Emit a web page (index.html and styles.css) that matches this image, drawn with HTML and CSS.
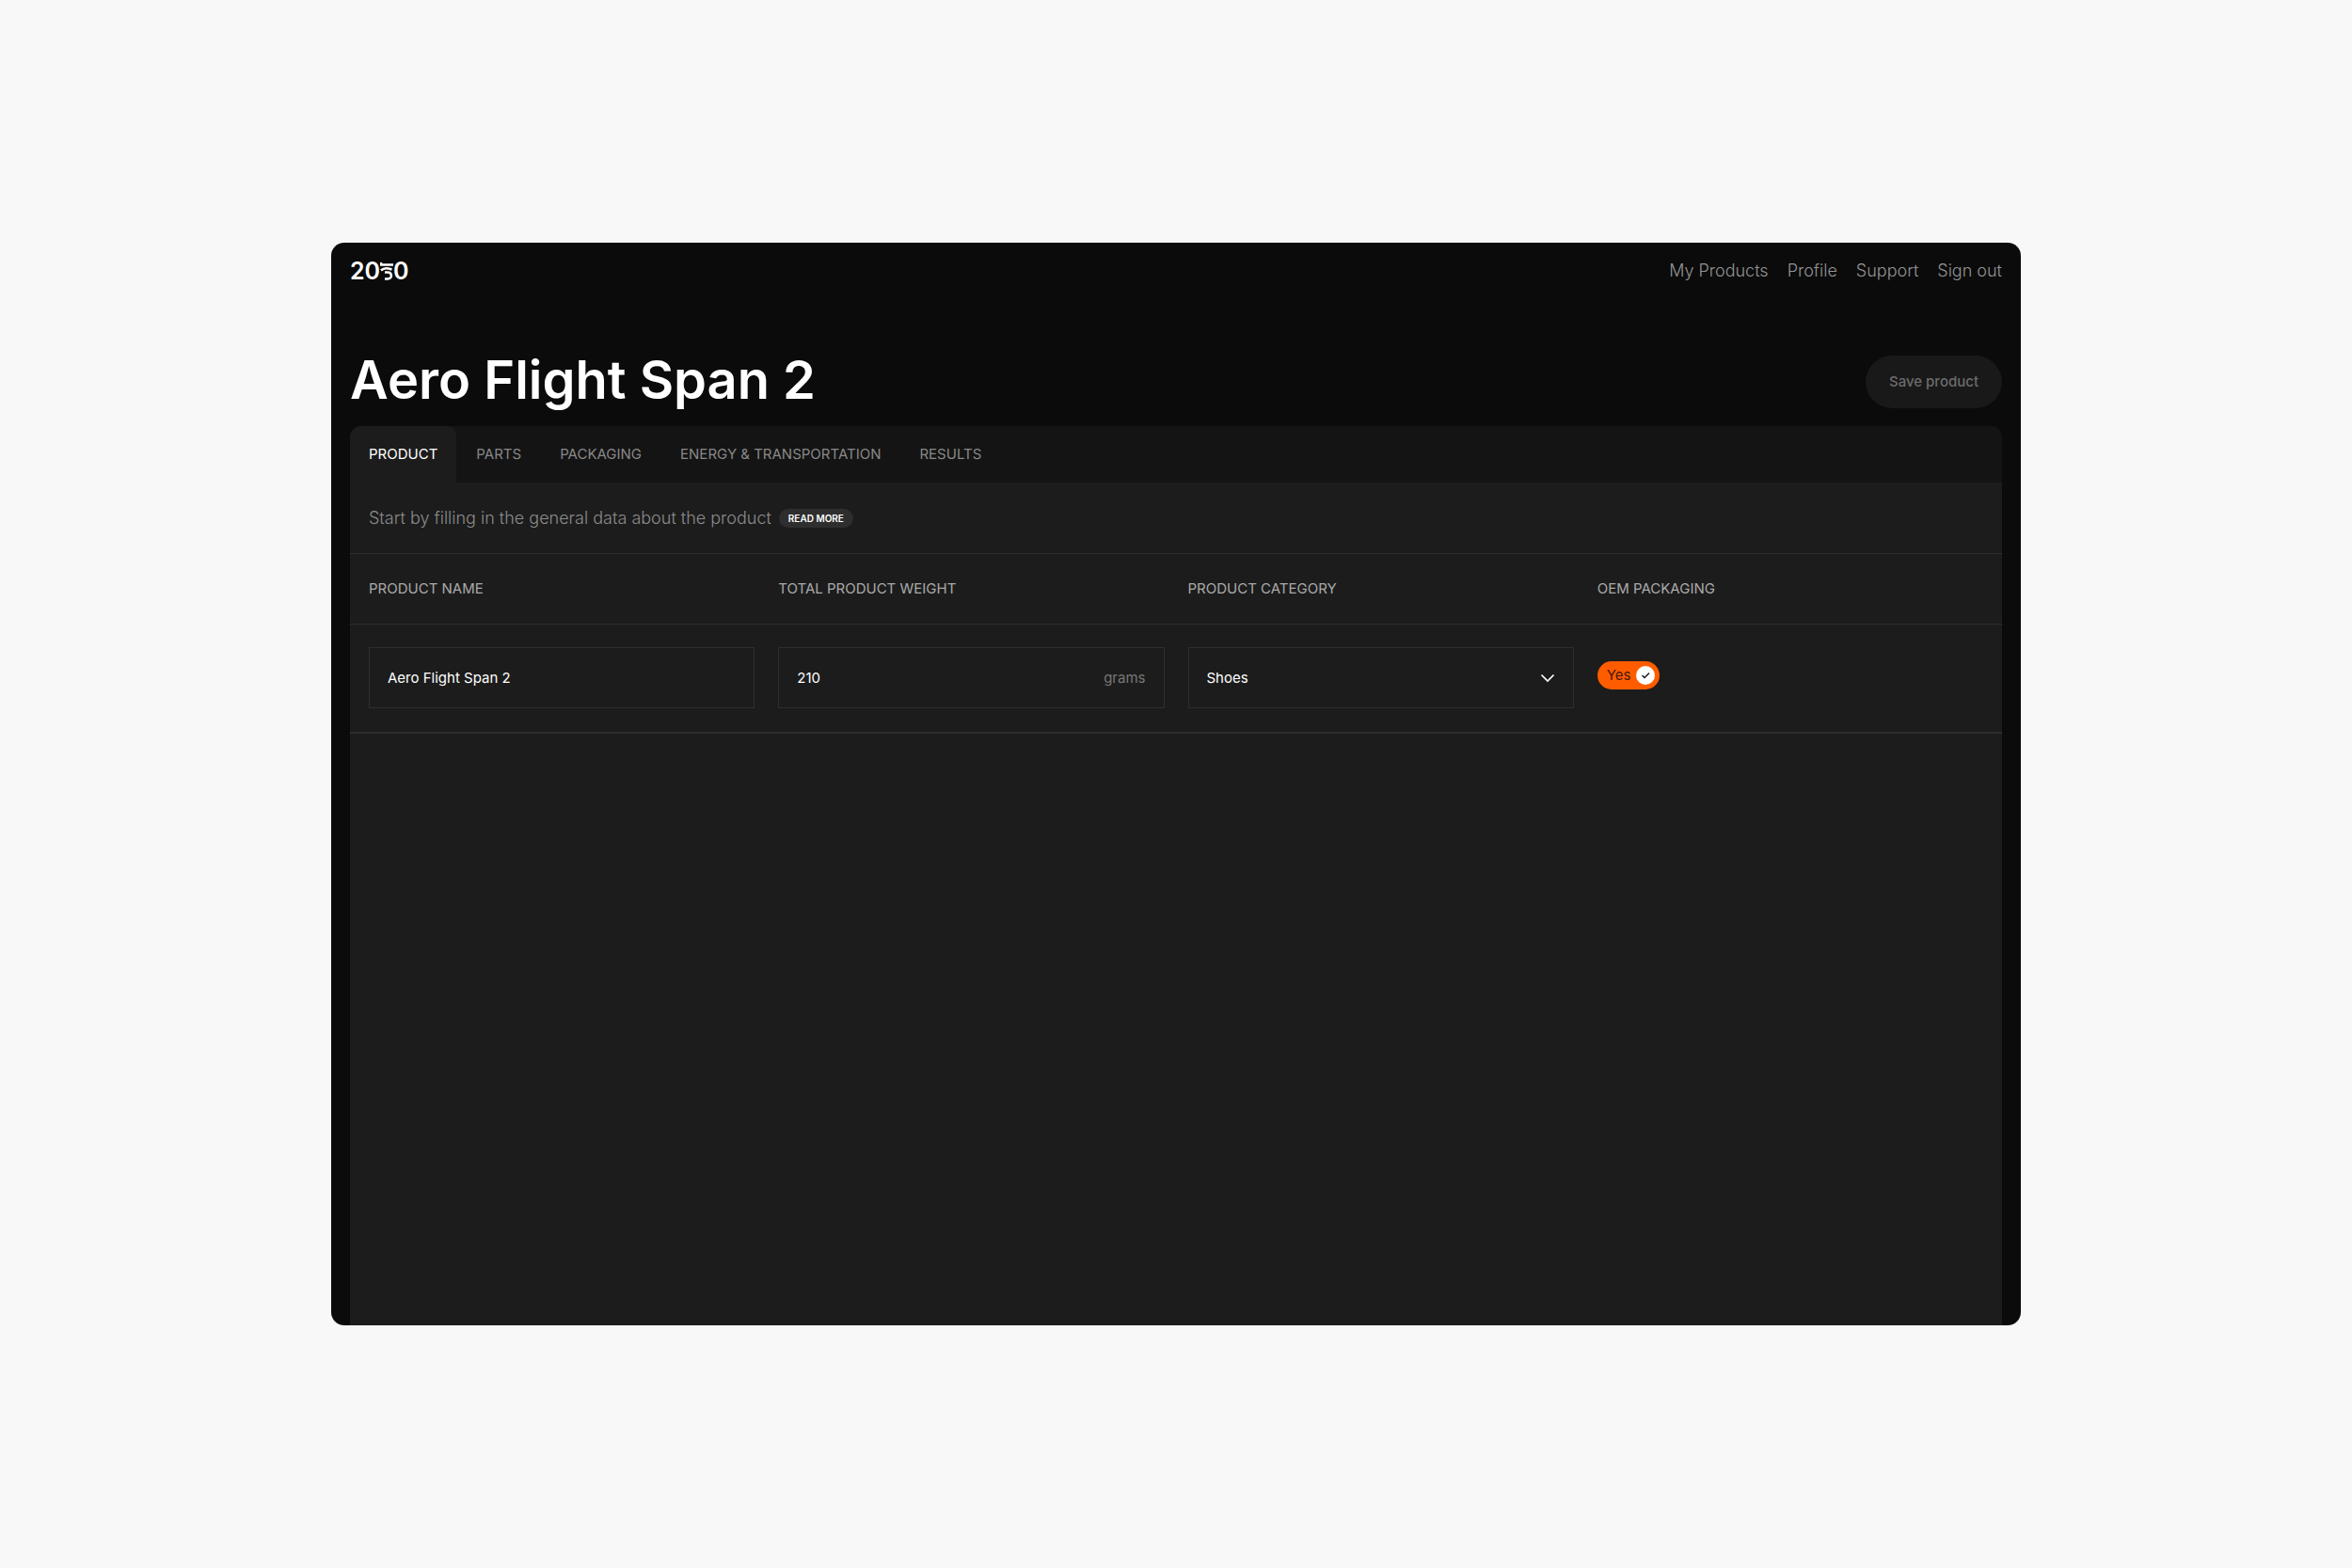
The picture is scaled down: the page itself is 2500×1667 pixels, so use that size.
FILE: index.html
```html
<!DOCTYPE html>
<html lang="en">
<head>
<meta charset="utf-8">
<meta name="viewport" content="width=device-width, initial-scale=1">
<title>Aero Flight Span 2</title>
<link rel="stylesheet" href="styles.css">
</head>
<body>
<div class="window">
  <header class="topbar">
    <a class="logo" href="#" aria-label="2050">
      <span>20</span>
      <svg class="logo-mark" viewBox="0 0 14 20" width="14" height="20" aria-hidden="true">
        <path d="M1 1V3.500H14M1 9.500C3 7.500 6 7 9 7.500L12.500 8.500" fill="none" stroke="#fff" stroke-width="2.500"/>
        <path d="M5 11.500H8C13 11.500 13.500 18.500 8 18.500H5" fill="none" stroke="#fff" stroke-width="2.500"/>
      </svg>
      <span>0</span>
    </a>
    <nav class="nav">
      <a href="#">My Products</a>
      <a href="#">Profile</a>
      <a href="#">Support</a>
      <a href="#">Sign out</a>
    </nav>
  </header>
  <main class="content">
    <div class="heading">
      <h1 class="title">Aero Flight Span 2</h1>
      <button class="save" type="button">Save product</button>
    </div>
    <section class="panel">
      <nav class="tabs">
        <a class="tab tab-active" href="#" aria-current="page">PRODUCT</a>
        <a class="tab" href="#">PARTS</a>
        <a class="tab" href="#">PACKAGING</a>
        <a class="tab" href="#">ENERGY &amp; TRANSPORTATION</a>
        <a class="tab" href="#">RESULTS</a>
      </nav>
      <div class="intro">
        <p>Start by filling in the general data about the product</p>
        <button class="more" type="button">READ MORE</button>
      </div>
      <form class="form">
        <div class="row labels">
          <label for="name">PRODUCT NAME</label>
          <label for="weight">TOTAL PRODUCT WEIGHT</label>
          <label for="category">PRODUCT CATEGORY</label>
          <label for="oem">OEM PACKAGING</label>
        </div>
        <div class="row fields">
          <div class="field"><input id="name" type="text" value="Aero Flight Span 2"></div>
          <div class="field"><input id="weight" type="text" inputmode="numeric" value="210"><span class="unit">grams</span></div>
          <div class="field">
            <select id="category"><option>Shoes</option></select>
            <svg class="chevron" viewBox="0 0 16 10" width="16" height="10" aria-hidden="true"><path d="M1.500 1.500L8 8L14.500 1.500" fill="none" stroke="#fff" stroke-width="1.700"/></svg>
          </div>
          <label class="toggle">
            <input id="oem" type="checkbox" checked>
            <span>Yes</span>
            <span class="knob"><svg viewBox="0 0 20 20" width="20" height="20" aria-hidden="true"><path d="M6.500 10L9 12.500L14 7.500" fill="none" stroke="#1c1c1c" stroke-width="1.500"/></svg></span>
          </label>
        </div>
      </form>
    </section>
  </main>
</div>
</body>
</html>
```
FILE: styles.css
```css
* { box-sizing: border-box; }

body {
  margin: 0;
  min-height: 100vh;
  padding: 258px 352px;
  display: flex;
  flex-direction: column;
  background: #f8f8f8;
  color: #fff;
  font-family: Inter, sans-serif;
  font-size: 15px;
  line-height: 20px;
}

a { color: inherit; text-decoration: none; }
button, input, select { font: inherit; color: inherit; border: 0; background: none; }
h1, p { margin: 0; }

.window {
  flex: 1;
  display: flex;
  flex-direction: column;
  padding: 0 20px;
  border-radius: 14px;
  background: #0b0b0b;
  overflow: hidden;
}

.topbar {
  display: flex;
  justify-content: space-between;
  align-items: center;
  height: 60px;
}

.logo {
  display: flex;
  align-items: center;
  font-size: 25px;
  font-weight: 600;
}

.nav {
  display: flex;
  gap: 20px;
  font-size: 18px;
  font-weight: 300;
  color: #949494;
}

.content {
  flex: 1;
  display: flex;
  flex-direction: column;
}

.heading {
  display: flex;
  justify-content: space-between;
  align-items: flex-start;
  padding: 60px 0 19px;
}

.title {
  font-size: 56px;
  line-height: 52px;
  font-weight: 600;
}

.save {
  height: 56px;
  padding: 0 25px;
  border-radius: 28px;
  background: #191919;
  color: #6c6c6c;
  font-weight: 500;
}

.panel {
  flex: 1;
  border-radius: 12px 12px 0 0;
  background: #1c1c1c;
  overflow: hidden;
}

.tabs {
  display: flex;
  gap: 1px;
  background: #141414;
  color: #888;
}

.tab { padding: 20px; }

.tab-active {
  border-radius: 10px 10px 0 0;
  background: #1c1c1c;
  color: #fff;
}

.intro {
  display: flex;
  align-items: center;
  gap: 8px;
  height: 76px;
  padding: 0 20px;
  border-bottom: 1px solid #2e2e2e;
  font-size: 18px;
  font-weight: 300;
  color: #8c8c8c;
}

.more {
  height: 20px;
  padding: 0 10px;
  border-radius: 10px;
  background: #2e2e2e;
  color: #fff;
  font-size: 10px;
  font-weight: 600;
}

.row {
  display: grid;
  grid-template-columns: repeat(4, 1fr);
  gap: 25px;
  padding: 0 20px;
  border-bottom: 1px solid #2e2e2e;
}

.labels {
  height: 75px;
  align-items: center;
  color: #aaa;
}

.fields {
  padding-top: 24px;
  padding-bottom: 25px;
  border-bottom-width: 2px;
}

.field {
  display: flex;
  align-items: center;
  height: 65px;
  padding: 0 19px;
  border: 1px solid #2e2e2e;
}

.field input, .field select {
  flex: 1;
  min-width: 0;
  height: 100%;
  padding: 0;
  outline: 0;
  appearance: none;
}

.unit { color: #777; }

.toggle {
  display: flex;
  align-items: center;
  justify-self: start;
  gap: 6px;
  height: 30px;
  margin-top: 15px;
  padding: 0 5px 0 10px;
  border-radius: 15px;
  background: #ff5c00;
  color: #4a1608;
}

.toggle input {
  position: absolute;
  opacity: 0;
}

.knob {
  display: flex;
  border-radius: 50%;
  background: #fff;
}
```
